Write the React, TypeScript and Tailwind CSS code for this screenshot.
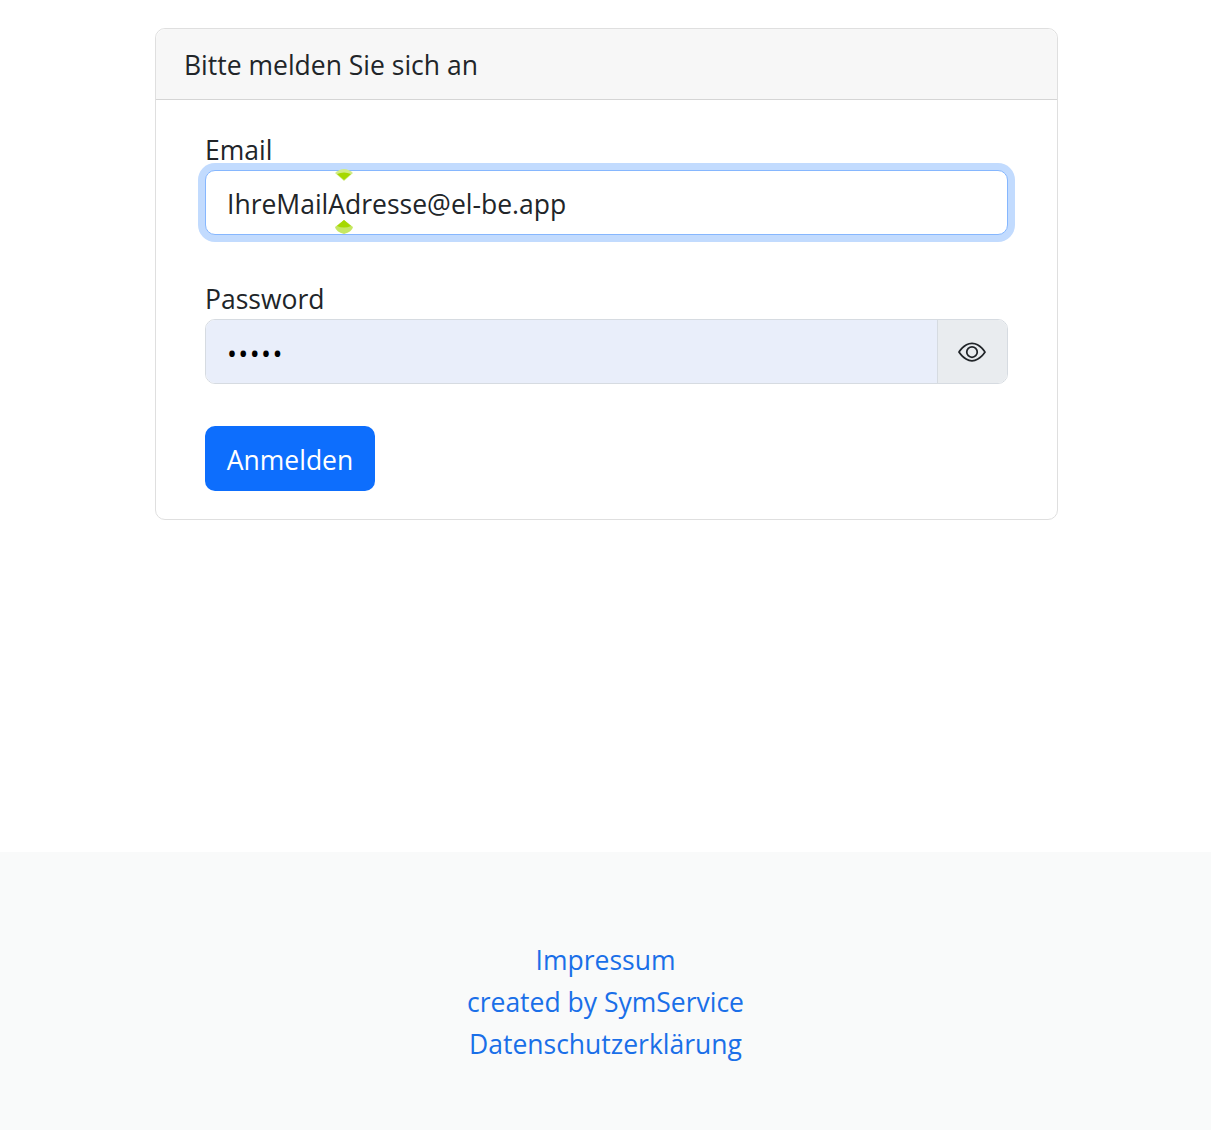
import React from 'react';
import { BsEye } from 'react-icons/bs';

const App: React.FC = () => {
  return (
    <div className="flex flex-col h-[1130px] bg-white text-[#212529] text-[26.5px] leading-[42px] font-['Open_Sans',sans-serif]">
      <main className="pt-[28px] pl-[155px] pr-[153px]">
        {/* Login card */}
        <div className="rounded-[10px] border border-[#dfdfdf]">
          <div className="h-[71px] px-[28px] py-[15px] bg-[#f7f7f7] border-b border-[#d5d5d5] rounded-t-[10px]">
            Bitte melden Sie sich an
          </div>
          <form className="px-[49px] pt-[30px] pb-[28px]">
            <label className="block h-[40px] mt-[-1px] mb-[1px]">Email</label>
            <div className="relative">
              <input
                type="text"
                readOnly
                value="IhreMailAdresse@el-be.app"
                className="block w-full h-[65px] px-[21px] pt-[2px] bg-white rounded-[10px] border border-[#86b7fe] outline-none shadow-[0_0_0_7px_#c2dbfe]"
              />
              {/* password manager markers */}
              <svg className="absolute left-[130px] top-[-2px]" width="18" height="13" viewBox="0 0 18 13">
                <path d="M0 5 Q9 -3 18 5 L9 13 Z" fill="#d2ec86" />
                <path d="M2 6 Q9 3 16 6 L9 12 Z" fill="#a6d800" />
              </svg>
              <svg className="absolute left-[130px] top-[50px]" width="18" height="14" viewBox="0 0 18 14">
                <path d="M9 0 L18 7 Q17 12 9 14 Q1 12 0 7 Z" fill="#c6e763" />
                <path d="M9 0 L16 6 Q9 9 2 6 Z" fill="#a6d800" />
              </svg>
            </div>
            <label className="block h-[42px] mt-[43px]">Password</label>
            <div className="flex h-[65px] mt-[-1px] rounded-[10px] border border-[#d6dbe1] overflow-hidden">
              <input
                type="password"
                readOnly
                value="12345"
                className="flex-1 min-w-0 px-[21px] pt-[4px] bg-[#e9eefa] text-black outline-none tracking-[1.4px]"
              />
              <span className="flex items-center justify-center w-[70px] pr-[2px] bg-[#e9ecef] border-l border-[#d6dbe1]">
                <BsEye size={28} />
              </span>
            </div>
            <button
              type="button"
              className="block h-[65px] w-[170px] mt-[42px] pt-[2px] bg-[#0d6efd] text-white rounded-[10px]"
            >
              Anmelden
            </button>
          </form>
        </div>
      </main>
      <footer className="mt-auto h-[278px] pt-[87px] bg-[#f9fafa] flex flex-col items-center text-[#1a6fe8]">
        <a>Impressum</a>
        <a>created by SymService</a>
        <a>Datenschutzerklärung</a>
      </footer>
    </div>
  );
};

export default App;
